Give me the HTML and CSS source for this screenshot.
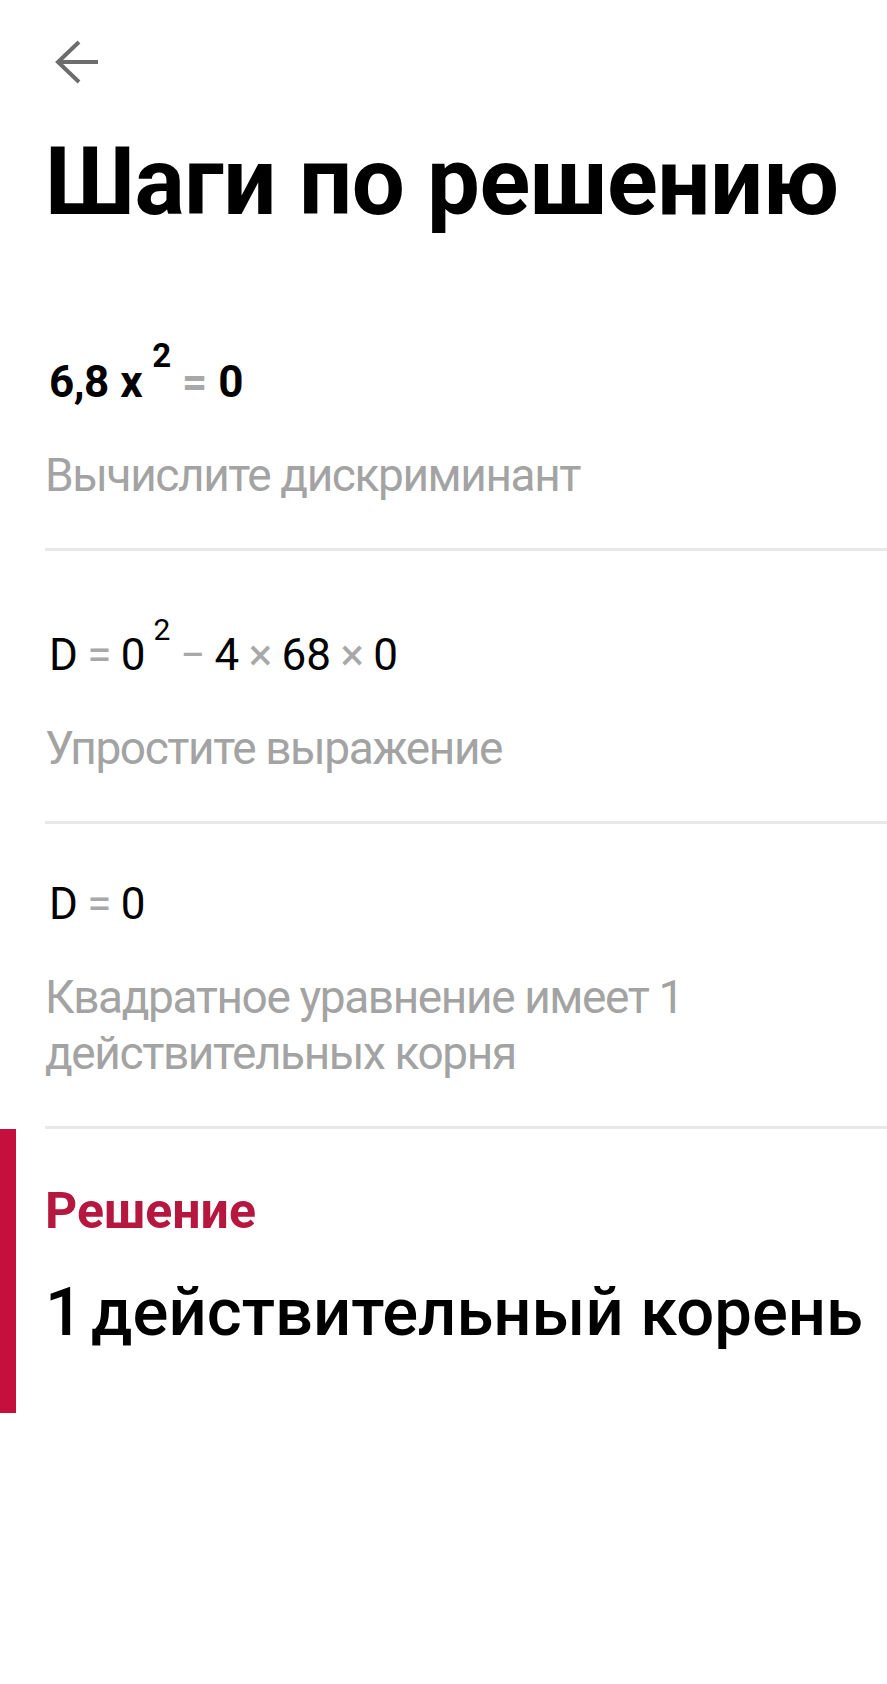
FILE: index.html
```html
<!DOCTYPE html>
<html lang="ru">
<head>
    <meta charset="UTF-8">
    <meta name="viewport" content="width=device-width, initial-scale=1.0">
    <title>Шаги по решению</title>
    <link rel="stylesheet" href="styles.css">
</head>
<body>
    <div class="top-bar">
        <svg class="back-icon" width="48" height="48" viewBox="0 0 48 48">
            <path d="M3 24 H44 M25 4 L4 24 L25 44" fill="none" stroke="#6d6d6d" stroke-width="4"/>
        </svg>
    </div>

    <h1 class="page-title">Шаги по решению</h1>

    <div class="steps">
        <div class="step">
            <div class="formula bold">6,8 x<sup>2</sup> <span class="op">=</span> 0</div>
            <div class="hint">Вычислите дискриминант</div>
        </div>
        <div class="step">
            <div class="formula">D <span class="op">=</span> 0<sup>2</sup> <span class="op">−</span> 4 <span class="op">×</span> 68 <span class="op">×</span> 0</div>
            <div class="hint">Упростите выражение</div>
        </div>
        <div class="step">
            <div class="formula">D <span class="op">=</span> 0</div>
            <div class="hint">Квадратное уравнение имеет 1 действительных корня</div>
        </div>
    </div>

    <div class="solution">
        <div class="solution-label">Решение</div>
        <div class="solution-value"><span class="count">1</span>действительный корень</div>
    </div>
</body>
</html>
```

FILE: styles.css
```css
body {
    margin: 0;
    font-family: Roboto, 'Noto Sans', sans-serif;
    color: #000;
    background: #fff;
    min-height: 100vh;
}

.top-bar {
    padding: 38px 0 0 54px;
    height: 48px;
}

.back-icon {
    display: block;
}

.page-title {
    margin: 40px 0 0 45px;
    font-size: 94px;
    font-weight: 700;
    line-height: 113px;
    letter-spacing: -0.5px;
}

.steps {
    margin: 38px 0 0 45px;
}

.step {
    padding: 56px 0 45px;
    border-bottom: 3px solid #e8e8e8;
}

.formula {
    font-size: 44px;
    line-height: 48px;
    margin-bottom: 41px;
    padding-left: 4px;
    word-spacing: -1.5px;
}

.formula.bold {
    font-weight: 700;
    letter-spacing: -0.5px;
    word-spacing: 1px;
}

.formula sup {
    font-size: 30px;
    line-height: 46px;
    vertical-align: 30px;
    margin-left: 8px;
}

.formula.bold sup {
    font-size: 33px;
    margin-left: 10px;
}

.op {
    color: #a8a8a8;
}

.hint {
    font-size: 46px;
    line-height: 56px;
    letter-spacing: -1.4px;
    color: #a3a3a3;
    max-width: 700px;
}

.solution {
    border-left: 16px solid #c50f3c;
    padding: 53px 0 61px 29px;
}

.solution-label {
    font-size: 50px;
    font-weight: 700;
    line-height: 58px;
    color: #b5173f;
}

.solution-value {
    margin-top: 32px;
    font-size: 67px;
    font-weight: 500;
    line-height: 80px;
}

.count {
    margin-right: 8px;
}
```
